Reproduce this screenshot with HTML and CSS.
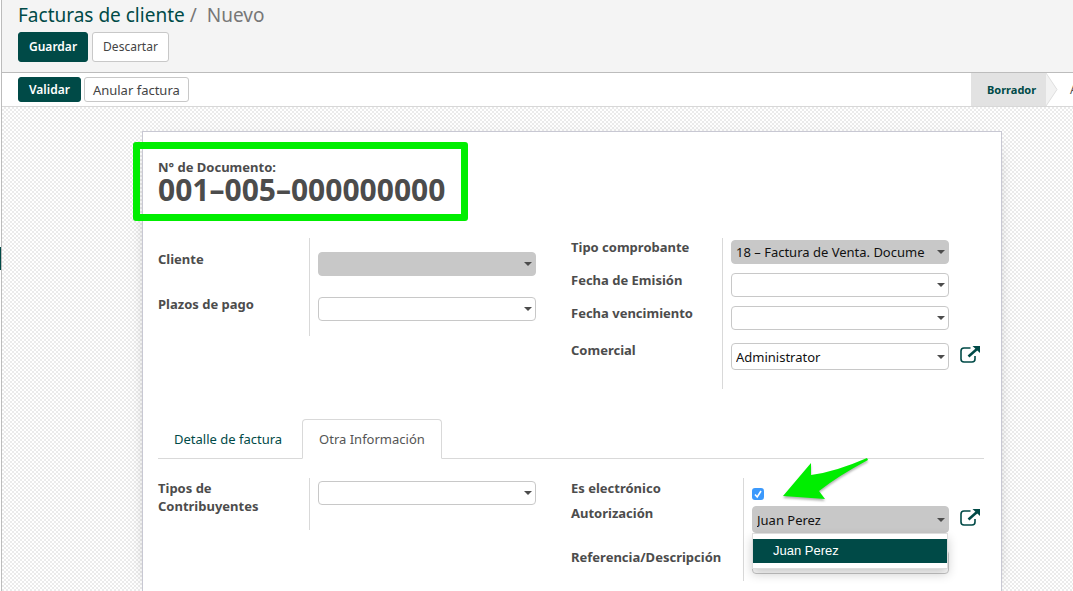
FILE: index.html
```
<!DOCTYPE html>
<html lang="es">
<head>
<meta charset="utf-8">
<title>Facturas de cliente / Nuevo</title>
<link rel="stylesheet" href="styles.css">
</head>
<body>
<div class="app">
  <span class="side-mark"></span>
  <header class="control-panel">
    <nav class="breadcrumb"><a href="#">Facturas de cliente</a><span class="slash">/</span><span>Nuevo</span></nav>
    <div class="actions">
      <button class="btn btn-primary" type="button">Guardar</button>
      <button class="btn" type="button">Descartar</button>
    </div>
  </header>
  <div class="statusbar">
    <div class="status-actions">
      <button class="btn btn-small btn-primary" type="button">Validar</button>
      <button class="btn btn-small btn-text" type="button">Anular factura</button>
    </div>
    <div class="stages">
      <span class="stage stage-current">Borrador</span>
      <svg class="stage-arrow" width="12" height="33" viewBox="0 0 12 33"><path d="M0 0L11 16.500L0 33" fill="#f2f2f2" stroke="#dedede"/></svg>
      <span class="stage stage-next">A</span>
    </div>
  </div>
  <main class="canvas">
    <section class="sheet">
      <div class="title">
        <span class="title-label">N° de Documento:</span>
        <h1 class="number">001–005–000000000</h1>
        <span class="highlight"></span>
      </div>
      <div class="groups groups-main">
        <div class="group">
          <div class="row row-wide">
            <label class="label" for="cliente">Cliente</label>
            <div class="cell"><select class="field required" id="cliente"><option></option></select></div>
          </div>
          <div class="row row-wide row-end">
            <label class="label" for="plazos">Plazos de pago</label>
            <div class="cell"><select class="field" id="plazos"><option></option></select></div>
          </div>
        </div>
        <div class="group">
          <div class="row">
            <label class="label" for="tipo">Tipo comprobante</label>
            <div class="cell"><select class="field required" id="tipo"><option>18 – Factura de Venta. Docume</option></select></div>
          </div>
          <div class="row">
            <label class="label" for="emision">Fecha de Emisión</label>
            <div class="cell"><input class="field" id="emision" type="text"></div>
          </div>
          <div class="row row-gap">
            <label class="label" for="vencimiento">Fecha vencimiento</label>
            <div class="cell"><input class="field" id="vencimiento" type="text"></div>
          </div>
          <div class="row row-last">
            <label class="label" for="comercial">Comercial</label>
            <div class="cell"><select class="field tall" id="comercial"><option>Administrator</option></select>
              <a class="open" href="#" aria-label="Abrir comercial"><svg width="20" height="18" viewBox="0 0 20 18"><path d="M10.500 2H4a3 3 0 0 0-3 3v8a3 3 0 0 0 3 3h8a3 3 0 0 0 3-3v-3" fill="none" stroke="currentColor" stroke-width="1.600"/><path d="M8.500 10.500L17 3" fill="none" stroke="currentColor" stroke-width="2.600"/><path d="M12.500 0H20v7z" fill="currentColor"/></svg></a>
            </div>
          </div>
        </div>
      </div>
      <nav class="tabs"><a class="tab" href="#">Detalle de factura</a><a class="tab tab-active" href="#">Otra Información</a></nav>
      <div class="groups groups-tab">
        <div class="group">
          <div class="row row-top row-short">
            <label class="label" for="tipos">Tipos de Contribuyentes</label>
            <div class="cell"><select class="field" id="tipos"><option></option></select></div>
          </div>
        </div>
        <div class="group group-long">
          <div class="row row-top row-check">
            <label class="label" for="electronico">Es electrónico</label>
            <div class="cell"><input class="check" id="electronico" type="checkbox" checked></div>
          </div>
          <div class="row row-auth">
            <label class="label" for="autorizacion">Autorización</label>
            <div class="cell">
              <div class="combo">
                <input class="field required tall" id="autorizacion" type="text" value="Juan Perez">
                <div class="menu"><button class="menu-item" type="button">Juan Perez</button></div>
              </div>
              <a class="open" href="#" aria-label="Abrir autorización"><svg width="20" height="18" viewBox="0 0 20 18"><path d="M10.500 2H4a3 3 0 0 0-3 3v8a3 3 0 0 0 3 3h8a3 3 0 0 0 3-3v-3" fill="none" stroke="currentColor" stroke-width="1.600"/><path d="M8.500 10.500L17 3" fill="none" stroke="currentColor" stroke-width="2.600"/><path d="M12.500 0H20v7z" fill="currentColor"/></svg></a>
            </div>
          </div>
          <div class="row">
            <label class="label" for="referencia">Referencia/Descripción</label>
            <div class="cell"><input class="field plain" id="referencia" type="text"></div>
          </div>
          <svg class="pointer" width="90" height="46" viewBox="0 0 90 46"><path d="M1 39L29 6V18Q53 15 85 1L86 3Q56 19 37 34L43 42Z" fill="#00ee00"/></svg>
        </div>
      </div>
    </section>
  </main>
</div>
</body>
</html>
```
FILE: styles.css
```
* { box-sizing: border-box; }
body { margin: 0; font-family: "Noto Sans", "Open Sans", sans-serif; font-size: 13px; line-height: 18px; color: #4c4c4c; }
a { color: #004a47; text-decoration: none; }
button, input, select { font: inherit; }

.app { position: relative; display: flex; flex-direction: column; height: 100vh; margin-left: 1px; border-left: 1px solid #bcbcbc; overflow: hidden; }
.side-mark { position: fixed; left: 0; top: 247px; width: 1px; height: 23px; background: #004a47; }

.control-panel { flex: none; height: 73px; padding: 3px 16px 0; background: #f4f4f4; border-bottom: 1px solid #bcbcbc; }
.breadcrumb { font-size: 19px; line-height: 24px; color: #777; }
.slash { margin: 0 10px 0 5px; }
.actions { display: flex; gap: 4px; margin-top: 5px; }
.btn { height: 30px; padding: 0 10px; font-size: 12px; color: #444; background: #fff; border: 1px solid #c8c8c8; border-radius: 3px; white-space: nowrap; }
.btn-primary { font-weight: 600; color: #fff; background: #004a47; border-color: #004a47; }
.btn-small { height: 25px; }
.btn-text { padding: 0 8px; font-size: 13px; }

.statusbar { flex: none; display: flex; justify-content: space-between; height: 34px; padding-left: 16px; background: #fff; border-bottom: 1px solid #d8d8d8; }
.status-actions { display: flex; align-items: center; gap: 3px; }
.stages { display: flex; width: 102px; font-size: 12px; line-height: 34px; overflow: hidden; }
.stage { flex: none; }
.stage-current { width: 75px; padding-left: 16px; font-size: 11px; font-weight: 700; color: #004a47; background: #e2e2e2; }
.stage-arrow { flex: none; }
.stage-next { padding-left: 12px; }

.canvas { flex: 1; display: flex; padding: 24px 71px 0 140px; background: repeating-conic-gradient(#ebebeb 0 25%, #fff 0 50%) 0 0 / 4px 4px; }
.sheet { flex: 1; min-width: 0; padding: 0 17px 0 15px; background: #fff; border: 1px solid #c8c8d3; border-bottom: 0; box-shadow: 0 5px 20px -15px #000; }

.title { position: relative; padding-top: 26px; }
.title-label { display: block; font-weight: 700; }
.number { margin: 0; font-size: 30px; line-height: 28px; font-weight: 700; }
.highlight { position: absolute; left: -25px; top: 10px; width: 335px; height: 79px; border: 7px solid #00ee00; border-radius: 3px; }

.groups { display: grid; grid-template-columns: 1fr 1fr; align-items: start; }
.groups-main { margin-top: 34px; }
.groups-tab { margin-top: 19px; }
.group { position: relative; }
.row { display: flex; min-height: 33px; }
.label { flex: none; width: 151px; padding-right: 24px; font-weight: 700; }
.cell { flex: 1; display: flex; align-items: flex-start; gap: 11px; padding: 2px 0 0 8px; border-left: 1px solid #d9d9d9; }
.row-wide { min-height: 45px; }
.row-wide .label { padding-top: 12px; }
.row-wide .cell { padding-top: 14px; }
.row-end { min-height: 53px; }
.row-gap { min-height: 37px; }
.row-last { min-height: 48px; }
.row-top .label { padding-top: 1px; }
.row-top .cell { padding-top: 3px; }
.row-short { min-height: 52px; }
.row-check { min-height: 26px; }
.row-auth { min-height: 44px; }
.group-long .label { width: 172px; padding-right: 0; }

.field { display: block; flex: none; width: 218px; height: 24px; margin: 0; padding: 0 14px 0 4px; color: #111; border: 1px solid #c8c8c8; border-radius: 4px; outline: 0; appearance: none; background: #fff url("data:image/svg+xml,%3Csvg xmlns='http://www.w3.org/2000/svg' width='8' height='4'%3E%3Cpath d='M0 0h8L4 4z' fill='%234c4c4c'/%3E%3C/svg%3E") no-repeat right 3px center; }
.required { background-color: #c8c8c8; }
.tall { height: 27px; }
.plain { background-image: none; }
.group-long .field { width: 197px; }
.open { display: flex; margin-top: 3px; }

.combo { position: relative; }
.menu { position: absolute; z-index: 1; left: 0; right: 1px; top: 27px; padding: 5px 0; background: #fff; border: 1px solid #ddd; box-shadow: 0 5px 10px rgba(0, 0, 0, .2); }
.menu-item { display: block; width: 100%; height: 24px; padding: 0 20px; border: 0; font-family: "Liberation Sans", Arial, sans-serif; text-align: left; color: #fff; background: #004a47; }
.check { width: 12px; height: 12px; margin: 7px 0 0; border-radius: 3px; appearance: none; background: #3b99fc; }
.check:checked { background: #3b99fc url("data:image/svg+xml,%3Csvg xmlns='http://www.w3.org/2000/svg' width='12' height='12'%3E%3Cpath d='M3 6.500l2.200 2.500L9 3' fill='none' stroke='white' stroke-width='1.600'/%3E%3C/svg%3E") center no-repeat; }
.pointer { position: absolute; left: 211px; top: -21px; filter: drop-shadow(0 2px 1px rgba(0, 0, 0, .3)); }

.tabs { display: flex; margin-top: 30px; border-bottom: 1px solid #d9d9d9; }
.tab { padding: 10px 15px; margin-bottom: -1px; border: 1px solid transparent; border-radius: 4px 4px 0 0; }
.tab-active { margin-left: 4px; padding: 10px 16px; color: #555; background: #fff; border-color: #d9d9d9 #d9d9d9 #fff; }
```
